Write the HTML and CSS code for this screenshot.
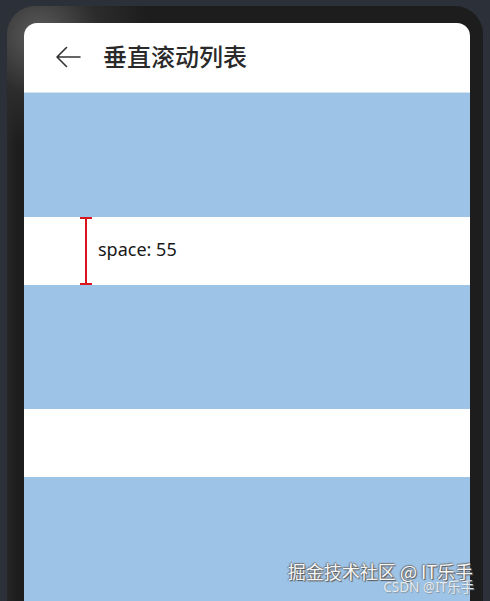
FILE: index.html
```html
<!DOCTYPE html>
<html lang="zh">
<head>
<meta charset="utf-8">
<title>垂直滚动列表</title>
<link rel="stylesheet" href="styles.css">
</head>
<body>
<div class="device">
  <div class="screen">
    <header class="header">
      <svg class="back" width="26" height="22" viewBox="0 0 26 22" aria-hidden="true">
        <path d="M25 11H2 M11.5 1.5L2 11L11.5 20.5" fill="none" stroke="#333" stroke-width="1.6" stroke-linecap="round" stroke-linejoin="round"/>
      </svg>
      <h1 class="title">垂直滚动列表</h1>
    </header>
    <div class="list">
      <div class="item"></div>
      <div class="gap">
        <div class="marker"><span class="cap"></span><span class="bar"></span><span class="cap"></span></div>
        <span class="gap-label">space: 55</span>
      </div>
      <div class="item"></div>
      <div class="gap"></div>
      <div class="item"></div>
    </div>
  </div>
  <div class="watermark">
    <span class="wm-main">掘金技术社区 @ IT乐手</span>
    <span class="wm-sub">CSDN @IT乐手</span>
  </div>
</div>
</body>
</html>
```

FILE: styles.css
```css
html, body {
  margin: 0;
  padding: 0;
}
body {
  width: 490px;
  height: 601px;
  overflow: hidden;
  background: #2c3039;
  font-family: "Noto Sans", "Noto Sans CJK SC", sans-serif;
}
.device {
  position: relative;
  margin: 6px 0 0 7px;
  width: 476px;
  height: 595px;
  box-sizing: border-box;
  padding: 17px 13px 0 17px;
  border-radius: 28px 28px 0 0;
  background:
    radial-gradient(circle at 32px 30px, #5d5d5d 0, #4c4c4c 20px, #2c2c2c 60px, rgba(29,29,29,0) 110px),
    linear-gradient(to right, #262626 0, #1d1d1d 10px, #1d1d1d 100%);
}
.screen {
  height: 100%;
  background: #fff;
  border-radius: 13px 13px 0 0;
  overflow: hidden;
  display: flex;
  flex-direction: column;
}
.header {
  height: 70px;
  flex: none;
  display: flex;
  align-items: center;
  padding-left: 31px;
  box-sizing: border-box;
  border-bottom: 1px solid #d4e3ee;
}
.back {
  display: block;
  margin-top: -2px;
}
.title {
  margin: -4px 0 0 22px;
  font-family: "Noto Sans CJK SC", sans-serif;
  font-size: 24px;
  font-weight: 500;
  color: #2a2a2a;
  line-height: 1;
}
.list {
  display: flex;
  flex-direction: column;
}
.item {
  height: 123.5px;
  flex: none;
  background: #9dc3e6;
}
.gap {
  height: 68.5px;
  flex: none;
  display: flex;
  align-items: center;
  padding-left: 56px;
  background: #fff;
}
.marker {
  width: 12px;
  height: 100%;
  display: flex;
  flex-direction: column;
  align-items: center;
}
.cap {
  width: 12px;
  height: 2px;
  background: #d9141e;
  flex: none;
}
.bar {
  width: 2px;
  flex: 1;
  background: #d9141e;
}
.gap-label {
  margin-left: 6px;
  font-family: "Noto Sans", sans-serif;
  font-size: 18px;
  color: #181818;
  margin-top: -4px;
}
.watermark {
  position: absolute;
  right: 10px;
  bottom: 2px;
  width: 200px;
  height: 40px;
}
.wm-main {
  position: absolute;
  right: 0;
  top: 0;
  font-family: "Noto Sans CJK SC", sans-serif;
  font-size: 18px;
  line-height: 24px;
  color: #f4f6f8;
  white-space: nowrap;
  text-shadow: 1px 1px 1px #555, -1px 0 1px #777, 0 -1px 1px #777;
}
.wm-sub {
  position: absolute;
  right: -1px;
  top: 19px;
  font-family: "Noto Sans", "Noto Sans CJK SC", sans-serif;
  font-size: 13.5px;
  line-height: 18px;
  color: #e6ebf0;
  white-space: nowrap;
  text-shadow: 0 0 1px #8a9aa8, 1px 1px 1px #8a9aa8;
}
```
